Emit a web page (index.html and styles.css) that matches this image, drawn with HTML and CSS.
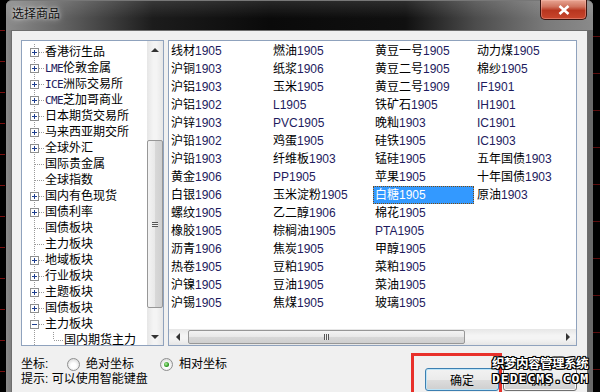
FILE: index.html
```html
<!DOCTYPE html>
<html lang="zh-CN">
<head>
    <meta charset="UTF-8">
    <title>选择商品</title>
    <link rel="stylesheet" href="styles.css">
</head>
<body>

<svg class="defs" width="0" height="0">
    <symbol id="plus" viewBox="0 0 9 9">
        <rect x="0.5" y="0.5" width="8" height="8" fill="#fff" stroke="#8e8f8f"/>
        <path d="M2 4.5h5M4.5 2v5" stroke="#1e3f8f"/>
    </symbol>
    <symbol id="minus" viewBox="0 0 9 9">
        <rect x="0.5" y="0.5" width="8" height="8" fill="#fff" stroke="#8e8f8f"/>
        <path d="M2 4.5h5" stroke="#1e3f8f"/>
    </symbol>
</svg>

<div class="window">
    <div class="titlebar">
        <span class="title">选择商品</span>
        <span class="close">
            <svg width="12" height="10" viewBox="0 0 12 10"><path d="M1.5 1l9 8M10.5 1l-9 8" stroke="#fff" stroke-width="2.6"/></svg>
        </span>
    </div>

    <div class="client">
        <div class="panels">
            <div class="tree-box">
                <div class="tree">
                    <div class="node"><span class="gut"><svg class="box"><use href="#plus"/></svg></span><span>香港衍生品</span></div>
                    <div class="node"><span class="gut"><svg class="box"><use href="#plus"/></svg></span><span><span class="en">LME</span>伦敦金属</span></div>
                    <div class="node"><span class="gut"><svg class="box"><use href="#plus"/></svg></span><span><span class="en">ICE</span>洲际交易所</span></div>
                    <div class="node"><span class="gut"><svg class="box"><use href="#plus"/></svg></span><span><span class="en">CME</span>芝加哥商业</span></div>
                    <div class="node"><span class="gut"><svg class="box"><use href="#plus"/></svg></span><span>日本期货交易所</span></div>
                    <div class="node"><span class="gut"><svg class="box"><use href="#plus"/></svg></span><span>马来西亚期交所</span></div>
                    <div class="node"><span class="gut"><svg class="box"><use href="#plus"/></svg></span><span>全球外汇</span></div>
                    <div class="node"><span class="gut"></span><span>国际贵金属</span></div>
                    <div class="node"><span class="gut"></span><span>全球指数</span></div>
                    <div class="node"><span class="gut"><svg class="box"><use href="#plus"/></svg></span><span>国内有色现货</span></div>
                    <div class="node"><span class="gut"><svg class="box"><use href="#plus"/></svg></span><span>国债利率</span></div>
                    <div class="node"><span class="gut"></span><span>国债板块</span></div>
                    <div class="node"><span class="gut"></span><span>主力板块</span></div>
                    <div class="node"><span class="gut"><svg class="box"><use href="#plus"/></svg></span><span>地域板块</span></div>
                    <div class="node"><span class="gut"><svg class="box"><use href="#plus"/></svg></span><span>行业板块</span></div>
                    <div class="node"><span class="gut"><svg class="box"><use href="#plus"/></svg></span><span>主题板块</span></div>
                    <div class="node"><span class="gut"><svg class="box"><use href="#plus"/></svg></span><span>国债板块</span></div>
                    <div class="node"><span class="gut"><svg class="box"><use href="#minus"/></svg></span><span>主力板块</span></div>
                    <div class="node"><span class="gut sub"></span><span>国内期货主力</span></div>
                </div>
                <div class="vscroll">
                    <span class="arrow up"></span>
                    <span class="vtrack"><span class="vthumb"><span class="grip"></span></span></span>
                    <span class="arrow down"></span>
                </div>
            </div>

            <div class="list-box">
                <div class="items">
                    <div class="item">线材<span class="n">1905</span></div>
                    <div class="item">沪铜<span class="n">1903</span></div>
                    <div class="item">沪铝<span class="n">1903</span></div>
                    <div class="item">沪铝<span class="n">1902</span></div>
                    <div class="item">沪锌<span class="n">1903</span></div>
                    <div class="item">沪铅<span class="n">1902</span></div>
                    <div class="item">沪铅<span class="n">1903</span></div>
                    <div class="item">黄金<span class="n">1906</span></div>
                    <div class="item">白银<span class="n">1906</span></div>
                    <div class="item">螺纹<span class="n">1905</span></div>
                    <div class="item">橡胶<span class="n">1905</span></div>
                    <div class="item">沥青<span class="n">1906</span></div>
                    <div class="item">热卷<span class="n">1905</span></div>
                    <div class="item">沪镍<span class="n">1905</span></div>
                    <div class="item">沪锡<span class="n">1905</span></div>

                    <div class="item">燃油<span class="n">1905</span></div>
                    <div class="item">纸浆<span class="n">1906</span></div>
                    <div class="item">玉米<span class="n">1905</span></div>
                    <div class="item"><span class="n">L1905</span></div>
                    <div class="item"><span class="n">PVC1905</span></div>
                    <div class="item">鸡蛋<span class="n">1905</span></div>
                    <div class="item">纤维板<span class="n">1903</span></div>
                    <div class="item"><span class="n">PP1905</span></div>
                    <div class="item">玉米淀粉<span class="n">1905</span></div>
                    <div class="item">乙二醇<span class="n">1906</span></div>
                    <div class="item">棕榈油<span class="n">1905</span></div>
                    <div class="item">焦炭<span class="n">1905</span></div>
                    <div class="item">豆粕<span class="n">1905</span></div>
                    <div class="item">豆油<span class="n">1905</span></div>
                    <div class="item">焦煤<span class="n">1905</span></div>

                    <div class="item">黄豆一号<span class="n">1905</span></div>
                    <div class="item">黄豆二号<span class="n">1905</span></div>
                    <div class="item">黄豆二号<span class="n">1909</span></div>
                    <div class="item">铁矿石<span class="n">1905</span></div>
                    <div class="item">晚籼<span class="n">1903</span></div>
                    <div class="item">硅铁<span class="n">1905</span></div>
                    <div class="item">锰硅<span class="n">1905</span></div>
                    <div class="item">苹果<span class="n">1905</span></div>
                    <div class="item selected">白糖<span class="n">1905</span></div>
                    <div class="item">棉花<span class="n">1905</span></div>
                    <div class="item"><span class="n">PTA1905</span></div>
                    <div class="item">甲醇<span class="n">1905</span></div>
                    <div class="item">菜粕<span class="n">1905</span></div>
                    <div class="item">菜油<span class="n">1905</span></div>
                    <div class="item">玻璃<span class="n">1905</span></div>

                    <div class="item">动力煤<span class="n">1905</span></div>
                    <div class="item">棉纱<span class="n">1905</span></div>
                    <div class="item"><span class="n">IF1901</span></div>
                    <div class="item"><span class="n">IH1901</span></div>
                    <div class="item"><span class="n">IC1901</span></div>
                    <div class="item"><span class="n">IC1903</span></div>
                    <div class="item">五年国债<span class="n">1903</span></div>
                    <div class="item">十年国债<span class="n">1903</span></div>
                    <div class="item">原油<span class="n">1903</span></div>
                </div>
                <div class="hscroll">
                    <span class="arrow left"></span>
                    <span class="htrack"><span class="hthumb"><span class="grip"></span></span></span>
                    <span class="arrow right"></span>
                </div>
            </div>
        </div>

        <div class="bottom">
            <div class="opts">
                <div class="line">
                    <span class="label">坐标:</span>
                    <span class="radio"></span><span>绝对坐标</span>
                    <span class="radio on second"></span><span>相对坐标</span>
                </div>
                <div class="line">提示: 可以使用智能键盘</div>
            </div>
            <div class="buttons">
                <button class="btn default">确定</button>
                <button class="btn">取消</button>
            </div>
        </div>
    </div>

    <div class="mark"></div>
    <div class="watermark">
        <div class="wm-cn">织梦内容管理系统</div>
        <div class="wm-en">DEDECMS.COM</div>
    </div>
</div>

</body>
</html>
```

FILE: styles.css
```css
body {
    margin: 0;
    height: 392px;
    overflow: hidden;
    font-family: "Liberation Sans", "Noto Sans CJK SC", sans-serif;
    font-size: 12px;
    color: #000;
    background-color: #000;
    background-image:
        repeating-linear-gradient(to bottom, transparent 0 30px, #7a1010 30px 31px),
        repeating-linear-gradient(to bottom, transparent 0 36px, #5a0c0c 36px 37px);
    background-size: 5px 100%, 7px 100%;
    background-position: left top, right top;
    background-repeat: no-repeat;
}
.defs {
    position: absolute;
}
.window {
    position: relative;
    margin-left: 6px;
    width: 587px;
    height: 392px;
    display: flex;
    flex-direction: column;
    border-radius: 6px 6px 0 0;
    background: linear-gradient(to right, #8a8a8a 0, #5f5f5f 3%, #6a6a6a 100%);
}
.titlebar {
    height: 30px;
    display: flex;
    align-items: flex-start;
    border-top: 1px solid #777;
    border-radius: 6px 6px 0 0;
    box-sizing: border-box;
    background:
        linear-gradient(to bottom, rgba(255,255,255,0.12), rgba(255,255,255,0) 60%),
        linear-gradient(to right, #8c8c8c 0, #6a6a6a 8%, #1c1c1c 25%, #0a0a0a 45%, #101010 68%, #4c4c4c 80%, #7a7a7a 92%, #8a8a8a 100%);
}
.title {
    margin: 6px 0 0 6px;
    font-size: 12px;
    line-height: 14px;
    color: #101010;
    text-shadow: 0 0 6px rgba(255,255,255,0.8), 0 0 3px rgba(255,255,255,0.6);
}
.close {
    margin: -1px 6px 0 auto;
    width: 47px;
    height: 20px;
    box-sizing: border-box;
    display: flex;
    align-items: center;
    justify-content: center;
    border: 1px solid #3b1410;
    border-top: none;
    border-radius: 0 0 5px 5px;
    background: linear-gradient(to bottom, #e8a593 0, #d0735e 35%, #b8361f 55%, #c9462d 100%);
    box-shadow: inset 0 0 0 1px rgba(255,200,190,0.35);
}
.client {
    flex: 1;
    margin: 0 5px;
    padding: 9px 10px 0 9px;
    background-color: #f0f0f0;
    border: 1px solid #6d6d6d;
    border-bottom: none;
}
.panels {
    display: flex;
    gap: 4px;
    height: 306px;
}
.tree-box, .list-box {
    box-sizing: border-box;
    height: 306px;
    border: 1px solid #8fa2bd;
    background-color: #fff;
    display: flex;
}
.tree-box {
    width: 143px;
}
.tree {
    flex: 1;
    padding-top: 3px;
    overflow: hidden;
}
.node {
    height: 16px;
    display: flex;
    align-items: center;
    white-space: nowrap;
    line-height: 16px;
}
.gut {
    position: relative;
    flex: none;
    width: 23px;
    height: 16px;
    display: flex;
    align-items: center;
    background-image: linear-gradient(to bottom, #9a9a9a 50%, transparent 50%);
    background-size: 1px 2px;
    background-position: 12px 0;
    background-repeat: repeat-y;
}
.gut::after {
    content: "";
    position: absolute;
    left: 13px;
    top: 8px;
    width: 9px;
    height: 1px;
    background-image: linear-gradient(to right, #9a9a9a 50%, transparent 50%);
    background-size: 2px 1px;
}
.gut.sub {
    width: 42px;
}
.gut.sub::after {
    left: 32px;
    width: 9px;
}
.gut.sub::before {
    content: "";
    position: absolute;
    left: 31px;
    top: 0;
    width: 1px;
    height: 8px;
    background-image: linear-gradient(to bottom, #9a9a9a 50%, transparent 50%);
    background-size: 1px 2px;
}
.box {
    position: relative;
    z-index: 1;
    width: 9px;
    height: 9px;
    margin-left: 8px;
}
.en {
    font-family: "DejaVu Sans Mono", monospace;
    font-size: 11px;
    letter-spacing: -0.6px;
    color: #1d1b5e;
}
.vscroll {
    width: 16px;
    display: flex;
    flex-direction: column;
    background: linear-gradient(to right, #e6e6e6, #f4f4f4 40%, #f4f4f4 60%, #e6e6e6);
}
.arrow {
    flex: none;
    display: flex;
    align-items: center;
    justify-content: center;
}
.vscroll .arrow {
    height: 17px;
}
.arrow::before {
    content: "";
    width: 0;
    height: 0;
    border: 3px solid transparent;
}
.arrow.up::before {
    border-top: none;
    border-bottom: 4px solid #333;
    border-left-width: 4px;
    border-right-width: 4px;
}
.arrow.down::before {
    border-bottom: none;
    border-top: 4px solid #333;
    border-left-width: 4px;
    border-right-width: 4px;
}
.arrow.left::before {
    border-left: none;
    border-right: 4px solid #333;
    border-top-width: 4px;
    border-bottom-width: 4px;
}
.arrow.right::before {
    border-right: none;
    border-left: 4px solid #333;
    border-top-width: 4px;
    border-bottom-width: 4px;
}
.vtrack {
    flex: 1;
    padding-top: 82px;
    padding-bottom: 20px;
    display: flex;
    justify-content: center;
}
.vthumb {
    width: 14px;
    flex: 1;
    box-sizing: border-box;
    border: 1px solid #979797;
    border-radius: 2px;
    background: linear-gradient(to right, #f3f3f3, #e8e8e8 50%, #d8d8d8 51%, #cfcfcf);
    display: flex;
    align-items: center;
    justify-content: center;
}
.vthumb .grip {
    width: 6px;
    height: 5px;
    background: repeating-linear-gradient(to bottom, #555 0 1px, #eee 1px 2px);
}
.list-box {
    width: 409px;
    flex-direction: column;
}
.items {
    flex: 1;
    padding-top: 1px;
    display: grid;
    grid-auto-flow: column;
    grid-template-rows: repeat(15, 18px);
    grid-auto-columns: 102px;
    align-content: start;
    overflow: hidden;
}
.item {
    padding-left: 2px;
    line-height: 18px;
    white-space: nowrap;
    box-sizing: border-box;
}
.n {
    color: #1d1b5e;
}
.item.selected {
    width: 101px;
    background-color: #3399ff;
    color: #fff;
    outline: 1px dotted #7a4a10;
    outline-offset: -1px;
}
.item.selected .n {
    color: #fff;
}
.hscroll {
    height: 16px;
    display: flex;
    background: linear-gradient(to bottom, #e6e6e6, #f4f4f4 40%, #f4f4f4 60%, #e6e6e6);
}
.hscroll .arrow {
    width: 17px;
}
.htrack {
    flex: 1;
    padding: 1px 94px 1px 2px;
    display: flex;
}
.hthumb {
    flex: 1;
    box-sizing: border-box;
    border: 1px solid #979797;
    border-radius: 2px;
    background: linear-gradient(to bottom, #f3f3f3, #e8e8e8 50%, #d8d8d8 51%, #cfcfcf);
    display: flex;
    align-items: center;
    justify-content: center;
}
.hthumb .grip {
    width: 5px;
    height: 6px;
    background: repeating-linear-gradient(to right, #555 0 1px, #eee 1px 2px);
}
.bottom {
    display: flex;
    justify-content: space-between;
    padding-top: 11px;
}
.line {
    height: 15px;
    line-height: 15px;
    display: flex;
    align-items: center;
    white-space: nowrap;
}
.label {
    width: 46px;
}
.radio {
    width: 11px;
    height: 11px;
    margin-right: 6px;
    border: 1px solid #8e8f8f;
    border-radius: 50%;
    background: radial-gradient(circle at 50% 60%, #fff 30%, #e2e2e2 70%, #cfcfcf);
    display: flex;
    align-items: center;
    justify-content: center;
}
.radio.second {
    margin-left: 26px;
}
.radio.on::after {
    content: "";
    width: 5px;
    height: 5px;
    border-radius: 50%;
    background: radial-gradient(circle at 40% 40%, #b6f2a6, #2f9a22 60%, #1f6a16);
}
.buttons {
    display: flex;
    gap: 4px;
    padding-top: 11px;
}
.btn {
    width: 74px;
    height: 23px;
    font-family: "Liberation Sans", "Noto Sans CJK SC", sans-serif;
    font-size: 12px;
    color: #000;
    border: 1px solid #707070;
    border-radius: 3px;
    background: linear-gradient(to bottom, #f2f2f2, #ebebeb 50%, #dddddd 51%, #cfcfcf);
    box-shadow: inset 0 0 0 1px rgba(255,255,255,0.8);
    padding: 0;
}
.btn.default {
    border-color: #3c7fb1;
    box-shadow: inset 0 0 0 1px #bde4f7;
}
.mark {
    position: absolute;
    left: 405px;
    top: 353px;
    width: 91px;
    height: 45px;
    box-sizing: border-box;
    border: 3px solid #e8302a;
}
.watermark {
    position: absolute;
    left: 486px;
    top: 357px;
    color: #fff;
    font-weight: bold;
    white-space: nowrap;
    text-shadow: 1px 0 0 #000, -1px 0 0 #000, 0 1px 0 #000, 0 -1px 0 #000, 1px 1px 0 #000, -1px -1px 0 #000, 1px -1px 0 #000, -1px 1px 0 #000;
}
.wm-cn {
    font-size: 12.5px;
    line-height: 14px;
    letter-spacing: -0.5px;
}
.wm-en {
    font-family: "DejaVu Sans Mono", monospace;
    font-size: 13px;
    line-height: 15px;
    letter-spacing: 1px;
}
```
